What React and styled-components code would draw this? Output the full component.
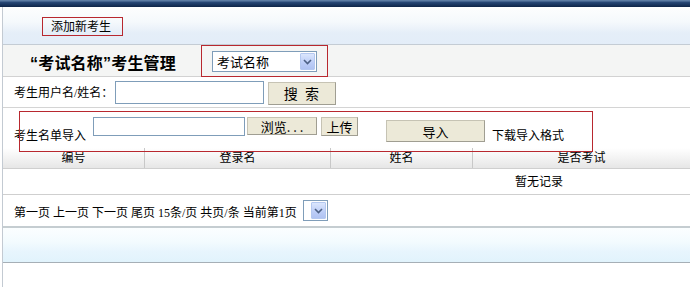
import styled, { createGlobalStyle } from "styled-components";

const GlobalStyle = createGlobalStyle`
  html, body {
    margin: 0;
    padding: 0;
    background: #ffffff;
  }
  body {
    font-family: "Noto Sans CJK SC", "Liberation Sans", sans-serif;
    font-size: 12px;
    color: #000;
  }
`;

const Page = styled.div`
  width: 690px;
  height: 287px;
  overflow: hidden;
`;

const TopBar = styled.div`
  height: 7px;
  background: linear-gradient(#5d7ca3 0, #5d7ca3 1px, #2a4a78 2px, #1d3a66 4px, #0f2547 7px);
`;

const Frame = styled.div`
  margin-left: 2px;
  border-left: 1px solid #c3cad2;
  height: 280px;
`;

const Header = styled.div`
  height: 38px;
  border-bottom: 1px solid #c4ccd4;
  background: linear-gradient(#fdfefe 0%, #f5f9fc 40%, #e5eef8 70%, #e3edf8 100%);
  padding: 10px 0 0 39px;
  box-sizing: border-box;
`;

const RedBox = styled.div`
  border: 1px solid #b8282f;
  box-sizing: border-box;
`;

const AddButton = styled(RedBox)`
  width: 81px;
  height: 19px;
  line-height: 16px;
  padding-left: 8px;
  font-size: 12px;
`;

const TitleRow = styled.div`
  height: 31px;
  background: #f4f5f4;
  border-bottom: 1px solid #d2d2d2;
  display: flex;
  align-items: center;
  padding-left: 27px;
`;

const Title = styled.div`
  font-family: "Liberation Sans", "Noto Sans CJK SC", sans-serif;
  font-size: 16px;
  font-weight: bold;
  width: 145px;
  flex-shrink: 0;
  white-space: nowrap;
  letter-spacing: 0.2px;
  padding-top: 2px;
`;

const SelectFrame = styled(RedBox)`
  margin-left: 26px;
  width: 127px;
  height: 32px;
  margin-top: 1px;
  padding: 5px 0 0 10px;
`;

const Select = styled.div`
  width: ${(p) => p.$w}px;
  height: ${(p) => p.$h}px;
  border: 1px solid #7f9db9;
  background: #fff;
  box-sizing: border-box;
  display: flex;
  align-items: center;
  justify-content: space-between;
  padding: 1px;
  font-size: 13px;
`;

const SelectText = styled.span`
  padding-left: 3px;
  line-height: 16px;
`;

const Arrow = styled.div`
  width: 15px;
  height: 100%;
  border: 1px solid #b4c8f0;
  box-sizing: border-box;
  border-radius: 1px;
  background: linear-gradient(#dbe6fd, #bccdf7 60%, #b0c3f2);
  display: flex;
  align-items: center;
  justify-content: center;
`;

const Row = styled.div`
  height: ${(p) => p.$h}px;
  border-bottom: 1px solid ${(p) => p.$line || "#d4d4d4"};
  display: flex;
  align-items: ${(p) => p.$align || "center"};
  padding-left: 11px;
  position: relative;
  background: #fff;
`;

const Label = styled.span`
  font-size: 12px;
  white-space: nowrap;
  margin-top: ${(p) => p.$top || 0}px;
  margin-left: ${(p) => p.$left || 0}px;
  font-family: "Liberation Serif", "Noto Sans CJK SC", serif;
`;

const TextInput = styled.div`
  width: ${(p) => p.$w}px;
  height: ${(p) => p.$h}px;
  margin-left: ${(p) => p.$left}px;
  margin-top: ${(p) => p.$top || 0}px;
  border: 1px solid #7f9db9;
  box-sizing: border-box;
  background: #fff;
`;

const Button = styled.div`
  width: ${(p) => p.$w}px;
  height: ${(p) => p.$h}px;
  margin-left: ${(p) => p.$left}px;
  margin-top: ${(p) => p.$top || 0}px;
  background: #ece9d8;
  border: 1px solid #c6c3b4;
  border-right-color: #a09e92;
  border-bottom-color: #a09e92;
  box-sizing: border-box;
  display: flex;
  align-items: center;
  justify-content: center;
  white-space: pre;
  font-size: ${(p) => p.$size || 12}px;
  letter-spacing: ${(p) => p.$spacing || 0}px;
`;

const Highlight = styled(RedBox)`
  position: absolute;
  left: 16px;
  top: 3px;
  width: 574px;
  height: 41px;
  z-index: 2;
  pointer-events: none;
`;

const TableHead = styled.div`
  display: grid;
  grid-template-columns: 141px 186px 142px 1fr;
  height: 20px;
  border-bottom: 1px solid #cfcfcf;
  background: linear-gradient(#ffffff, #f3f3f3 50%, #e6e6e6);
`;

const HeadCell = styled.div`
  text-align: center;
  line-height: 18px;
  font-size: 12px;
  border-left: ${(p) => (p.$first ? "none" : "1px solid #c8c8c8")};
`;

const Empty = styled.div`
  height: 25px;
  border-bottom: 1px solid #cfcfcf;
  padding-left: 512px;
  line-height: 24px;
  font-size: 12px;
`;

const Pager = styled.div`
  height: 31px;
  display: flex;
  align-items: center;
  padding-left: 11px;
  border-bottom: 2px solid #c5cdd1;
  font-family: "Liberation Serif", "Noto Sans CJK SC", serif;
  font-size: 12px;
`;

const PagerText = styled.span`
  margin-right: 6px;
  padding-top: 3px;
`;

const Footer = styled.div`
  height: 34px;
  border-bottom: 1px solid #a6afb6;
  background: linear-gradient(#fbfeff, #f3fbfe 40%, #e7f5fd 70%, #e1f3fc);
`;

const Chevron = () => (
  <svg width="9" height="6" viewBox="0 0 9 6">
    <path d="M1 1 L4.5 4.5 L8 1" fill="none" stroke="#4d6185" strokeWidth="1.6" />
  </svg>
);

export default function App() {
  return (
    <Page>
      <GlobalStyle />
      <TopBar />
      <Frame>
        <Header>
          <AddButton>添加新考生</AddButton>
        </Header>
        <TitleRow>
          <Title>“考试名称”考生管理</Title>
          <SelectFrame>
            <Select $w={105} $h={21}>
              <SelectText>考试名称</SelectText>
              <Arrow>
                <Chevron />
              </Arrow>
            </Select>
          </SelectFrame>
        </TitleRow>
        <Row $h={30}>
          <Label>考生用户名/姓名：</Label>
          <TextInput $w={149} $h={23} $left={2} />
          <Button $w={68} $h={23} $left={4} $top={2} $size={14} $spacing={2}>
            搜 索
          </Button>
        </Row>
        <Row $h={39} $align="flex-start" $line="#ffffff">
          <Label $top={18}>考生名单导入</Label>
          <TextInput $w={152} $h={19} $left={7} $top={9} />
          <Button $w={70} $h={18} $left={2} $top={9} $size={13}>
            浏览. . .
          </Button>
          <Button $w={37} $h={19} $left={4} $top={9} $size={13}>
            上传
          </Button>
          <Button $w={99} $h={22} $left={28} $top={12} $size={13}>
            导入
          </Button>
          <Label $top={18} $left={7}>下载导入格式</Label>
          <Highlight />
        </Row>
        <TableHead>
          <HeadCell $first>编号</HeadCell>
          <HeadCell>登录名</HeadCell>
          <HeadCell>姓名</HeadCell>
          <HeadCell>是否考试</HeadCell>
        </TableHead>
        <Empty>暂无记录</Empty>
        <Pager>
          <PagerText>第一页 上一页 下一页 尾页 15条/页 共页/条 当前第1页</PagerText>
          <Select $w={25} $h={21}>
            <span />
            <Arrow>
              <Chevron />
            </Arrow>
          </Select>
        </Pager>
        <Footer />
      </Frame>
    </Page>
  );
}
